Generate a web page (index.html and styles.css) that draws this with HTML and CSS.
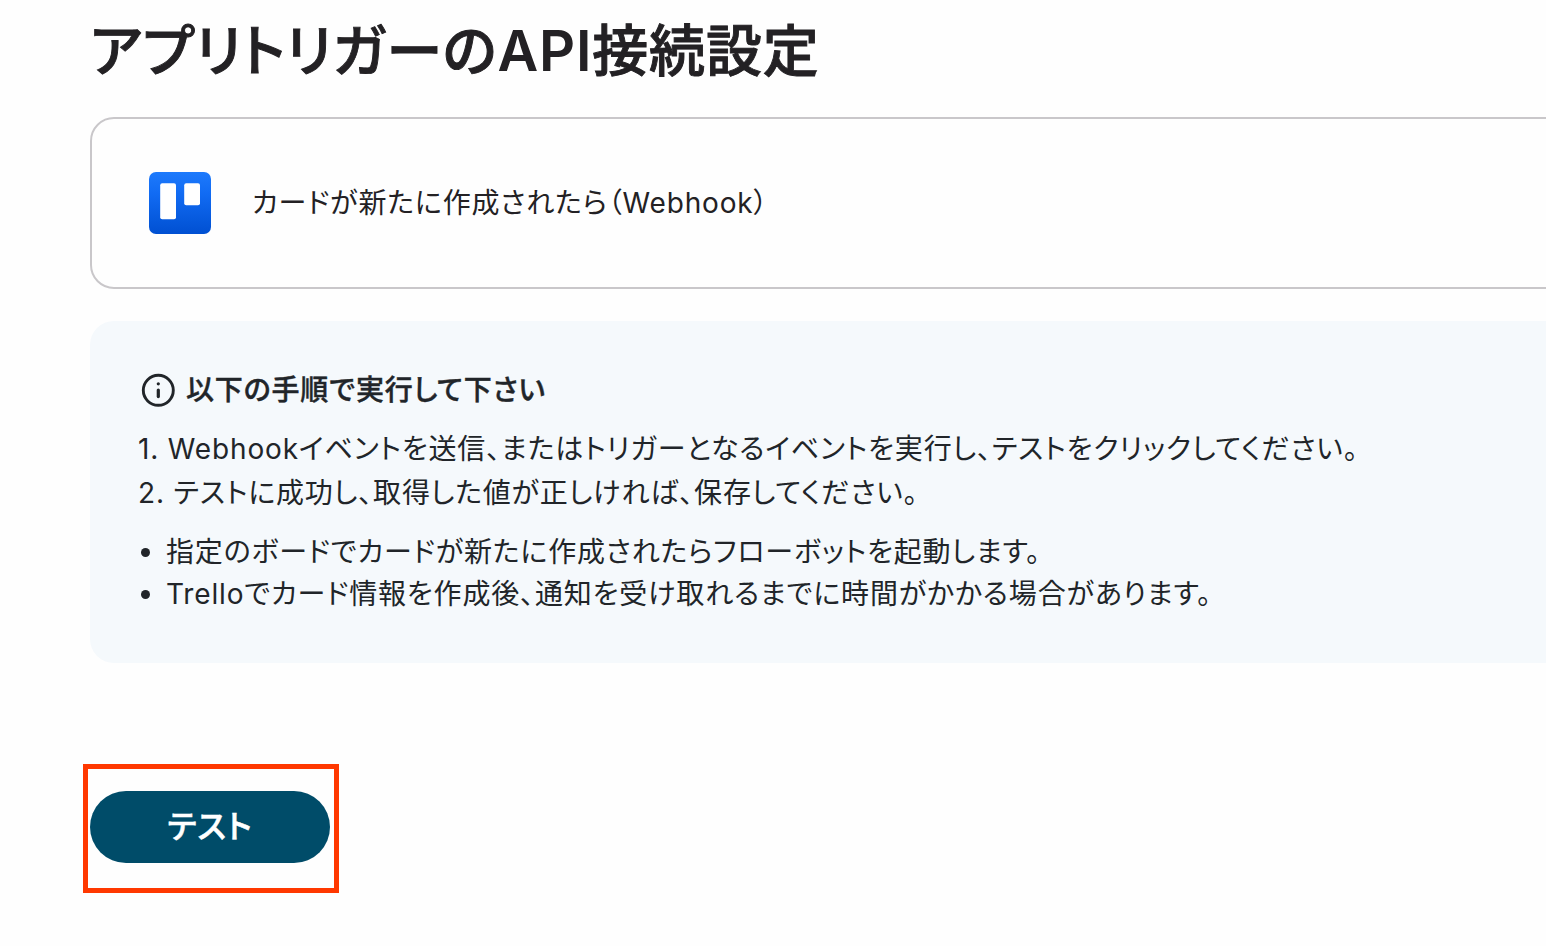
FILE: index.html
```html
<!DOCTYPE html>
<html lang="ja">
<head>
    <meta charset="UTF-8">
    <title>アプリトリガーのAPI接続設定</title>
    <link rel="stylesheet" href="styles.css">
</head>
<body>

<main class="side">
    <h1>アプリトリガーの<span>API</span>接続設定</h1>

    <div class="trigger">
        <svg class="logo" viewBox="0 0 62 62">
            <defs>
                <linearGradient id="blue" x1="0" y1="0" x2="0" y2="1">
                    <stop offset="0" stop-color="#1d7afc"/>
                    <stop offset="0.35" stop-color="#116bf3"/>
                    <stop offset="1" stop-color="#0050d2"/>
                </linearGradient>
            </defs>
            <rect width="62" height="62" rx="7" fill="url(#blue)"/>
            <rect x="11.2" y="11.2" width="15.8" height="36" rx="2" fill="white"/>
            <rect x="35.2" y="11.2" width="15.8" height="22" rx="2" fill="white"/>
        </svg>
        <p>カードが新たに作成されたら（Webhook）</p>
    </div>

    <div class="info">
        <h2>
            <svg class="ikon" viewBox="0 0 34 34">
                <circle cx="17.3" cy="17.3" r="15" fill="none" stroke="currentColor" stroke-width="2.9"/>
                <circle cx="17.3" cy="10.8" r="1.6" fill="currentColor"/>
                <path d="M17.3 17v6.6" stroke="currentColor" stroke-width="3.2" stroke-linecap="round"/>
            </svg>
            以下の手順で実行して下さい
        </h2>
        <p>1. Webhookイベントを送信、またはトリガーとなるイベントを実行し、テストをクリックしてください。</p>
        <p>2. テストに成功し、取得した値が正しければ、保存してください。</p>
        <ul>
            <li>指定のボードでカードが新たに作成されたらフローボットを起動します。</li>
            <li>Trelloでカード情報を作成後、通知を受け取れるまでに時間がかかる場合があります。</li>
        </ul>
    </div>

    <div class="marker">
        <button type="button">テスト</button>
    </div>
</main>

</body>
</html>
```
FILE: styles.css
```css
html {
    background-color: #fefefe;
    overflow: hidden;
}
body {
    margin: 0;
    font-family: Inter, "Noto Sans CJK JP", sans-serif;
    font-size: 28px;
    font-feature-settings: "palt";
    letter-spacing: 0.03em;
    color: #232124;
    white-space: nowrap;
}
h1, h2, p, ul {
    margin: 0;
    padding: 0;
}
.side {
    width: 1600px;
    padding: 11px 0 0 90px;
    box-sizing: border-box;
}
h1 {
    font-size: 56px;
    line-height: 80px;
    font-weight: 500;
    letter-spacing: 0.8px;
    -webkit-text-stroke: 0.9px;
}
h1 span {
    font-weight: 600;
    -webkit-text-stroke: 0;
}
.trigger {
    display: flex;
    align-items: center;
    gap: 41px;
    height: 172px;
    margin-top: 26px;
    padding-left: 57px;
    box-sizing: border-box;
    border: 2px solid #c9c7ca;
    border-radius: 24px;
}
.trigger p {
    padding-bottom: 5px;
}
.logo {
    width: 62px;
    height: 62px;
}
.info {
    height: 342px;
    margin-top: 32px;
    padding: 47px 48px;
    box-sizing: border-box;
    border-radius: 24px;
    background-color: #f5f9fc;
    color: #212529;
    line-height: 44px;
}
.info h2 {
    display: flex;
    align-items: center;
    gap: 11px;
    margin-bottom: 15px;
    padding-left: 3px;
    font-size: 28px;
    font-weight: 500;
    -webkit-text-stroke: 0.4px;
}
.ikon {
    width: 34px;
    height: 34px;
}
ul {
    margin-top: 16px;
    list-style: none;
    line-height: 42px;
}
li {
    display: flex;
    align-items: center;
    gap: 16px;
}
li::before {
    content: "";
    width: 9px;
    height: 9px;
    margin-left: 3px;
    border-radius: 50%;
    background-color: #212529;
}
.marker {
    width: 256px;
    height: 129px;
    margin: 101px 0 0 -7px;
    padding: 22px 2px;
    box-sizing: border-box;
    border: 5px solid #ff3800;
}
button {
    width: 240px;
    height: 72px;
    padding: 0 0 7px;
    border: none;
    border-radius: 36px;
    background-color: #004c69;
    color: white;
    font: inherit;
    font-size: 32px;
    font-weight: 500;
    font-feature-settings: "palt";
    letter-spacing: 0.03em;
    -webkit-text-stroke: 0.5px;
}
```
